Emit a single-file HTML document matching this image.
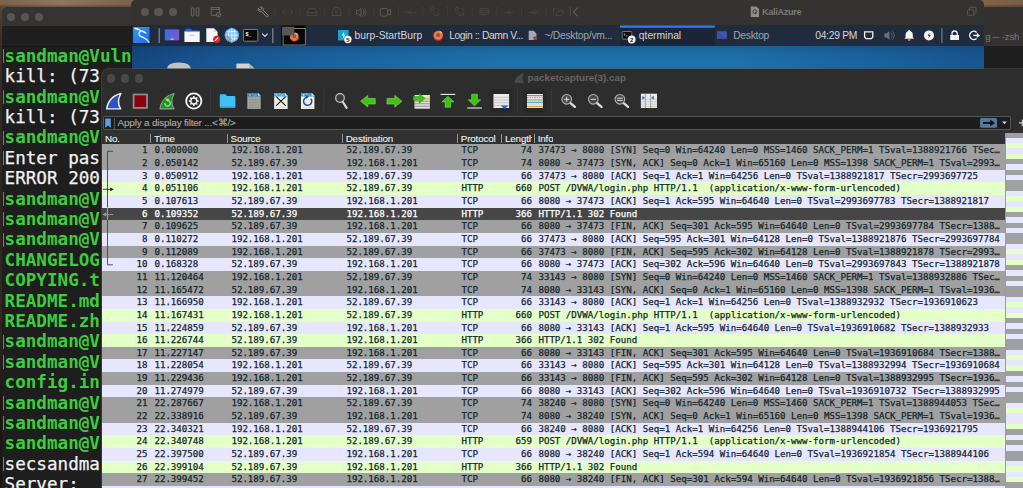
<!DOCTYPE html>
<html lang="en">
<head>
<meta charset="utf-8">
<title>packetcapture(3).cap</title>
<style>
html,body{margin:0;padding:0;}
body{opacity:0.999;width:1023px;height:488px;overflow:hidden;position:relative;background:#6b5240;font-family:"Liberation Sans",sans-serif;}
.abs{position:absolute;}
#wood{position:absolute;left:0;top:0;width:1023px;height:488px;background:linear-gradient(180deg,rgba(0,0,0,0) 0,rgba(0,0,0,0) 4px,rgba(30,20,10,0.35) 7px,rgba(30,20,10,0.45) 100%),linear-gradient(90deg,#7a614c,#8f765e 6%,#7c634d 12%,#94795f 20%,#80674f 30%,#6f5845 45%,#7b6049 80%,#80654b 96%,#775d45);}
/* left terminal */
#term{position:absolute;left:1.5px;top:7px;width:140.5px;height:490px;background:#1e1e1e;border-radius:6px 0 0 0;overflow:hidden;}
#term .tb{position:absolute;left:0;top:0;width:100%;height:19px;background:#353433;}
#term .tab{position:absolute;left:0;top:19px;width:100%;height:20px;background:#1f1f1f;border-bottom:1px dotted #111;}
.dot{position:absolute;width:8.6px;height:8.6px;border-radius:50%;background:#575655;}
.tl{position:absolute;left:3.1px;white-space:pre;font-family:"DejaVu Sans Mono","Liberation Mono",monospace;font-size:17.6px;line-height:20.4px;height:20.4px;}
.tl.p{color:#3ccc3c;font-weight:bold;}
.tl.w{color:#f2f2f2;-webkit-text-stroke:0.25px;}
.tl .mk{position:absolute;left:-1.4px;top:3.5px;width:1px;height:14px;background:#7c7c7c;}
/* right terminal */
#rterm{position:absolute;left:980px;top:7px;width:60px;height:70px;background:#1e1e1e;}
#rterm .tb{position:absolute;left:0;top:0;width:100%;height:39px;background:#333231;}
#rterm .tt{position:absolute;left:5.2px;top:23.8px;letter-spacing:-0.2px;font-size:9.5px;color:#7a7a7a;white-space:pre;}
/* VM window */
#vm{position:absolute;left:131px;top:0;width:853px;height:80px;background:#1a6aa3;border-radius:5px 5px 0 0;overflow:hidden;}
#vm .tb{position:absolute;left:0;top:0;width:100%;height:25px;background:#343331;}
#vm .panel{position:absolute;left:0;top:25px;width:100%;height:20.5px;background:#202b3d;}
#vm .desk{position:absolute;left:0;top:45.5px;width:100%;height:30px;background:linear-gradient(180deg,rgba(10,30,70,0.2) 0%,rgba(10,30,70,0.05) 25%,rgba(0,0,0,0) 50%),linear-gradient(90deg,#15477e 0%,#185590 10%,#1b639f 24%,#1e72ac 45%,#1e72ac 70%,#1a619c 88%,#17558f 100%);}
.pt{position:absolute;top:30.2px;font-size:10.3px;line-height:12px;color:#d3d7dd;white-space:pre;}
/* wireshark */
#ws{position:absolute;left:101.5px;top:69px;width:940px;height:430px;background:#2d2d2d;border-radius:6px 0 0 0;overflow:hidden;box-shadow:0 0 0 0.5px #555;}
#ws .title{position:absolute;left:426px;top:3.4px;font-size:9.85px;font-weight:bold;color:#656565;line-height:12px;white-space:pre;}
#filter{position:absolute;left:1.5px;top:47.1px;width:906px;height:12px;background:#1d1d1d;border:1px solid #565656;border-radius:2px;}
#filter .ft{position:absolute;left:13.6px;top:0.2px;font-size:9.9px;letter-spacing:-0.17px;-webkit-text-stroke:0.15px;line-height:12px;color:#a8a8a8;white-space:pre;}
#hdr{position:absolute;left:0;top:61.2px;width:921.5px;height:14.2px;background:#313131;}
#hdr span{position:absolute;top:2.8px;font-size:9.8px;letter-spacing:-0.15px;-webkit-text-stroke:0.1px #f2f2f2;line-height:12px;color:#f2f2f2;white-space:pre;overflow:hidden;}
#hdr i{position:absolute;top:3.6px;width:1px;height:9.4px;background:#949494;}
#list{position:absolute;left:101.5px;top:0;width:904.5px;height:488px;overflow:hidden;}
.r{-webkit-text-stroke:0.25px;position:absolute;left:0.4px;width:904.5px;height:12.75px;font-family:"DejaVu Sans Mono","Liberation Mono",monospace;font-size:9.13px;line-height:12.65px;color:#12272e;white-space:pre;}
.r span{position:absolute;top:0;}
.r.g{background:#a0a0a0;}
.r.t{background:#e7e6ff;}
.r.h{background:#e4ffc7;}
.r.s{background:#464646;color:#fff;}
.no{left:0;width:45.5px;text-align:right;}
.tm{left:52.5px;}
.sr{left:129.5px;}
.ds{left:244.5px;}
.pr{left:359.5px;}
.ln{left:400px;width:30px;text-align:right;}
.in{left:436.5px;}
#mm{position:absolute;left:1005.3px;top:130px;width:18px;height:358px;overflow:hidden;}
#mm:after{content:"";position:absolute;left:0;top:3.3px;width:1px;height:360px;background:#9a9a9a;}
#mm div{position:absolute;left:0;width:18px;}
</style>
</head>
<body>
<div id="wood"></div>
<div style="position:absolute;left:0;top:4px;width:2px;height:484px;background:linear-gradient(180deg,rgba(20,16,14,0) 0,rgba(20,16,14,0.45) 40px,rgba(20,16,14,0.6) 200px,rgba(20,16,14,0.5) 300px,rgba(20,16,14,0.85) 400px,rgba(20,16,14,0.9) 100%)"></div>

<!-- left terminal -->
<div id="term">
  <div class="tb"></div>
  <div class="tab"></div>
  <div class="dot" style="left:5px;top:5.5px"></div>
  <div class="dot" style="left:19px;top:5.5px"></div>
  <div class="dot" style="left:33px;top:5.5px"></div>
<div class="tl p" style="top:38.70px"><i class="mk"></i>sandman@VulnServer</div>
<div class="tl w" style="top:59.10px">kill: (73</div>
<div class="tl p" style="top:79.50px"><i class="mk"></i>sandman@V</div>
<div class="tl w" style="top:99.90px">kill: (73</div>
<div class="tl p" style="top:120.30px"><i class="mk"></i>sandman@V</div>
<div class="tl w" style="top:140.70px"><i class="mk"></i>Enter pas</div>
<div class="tl w" style="top:161.10px">ERROR 200</div>
<div class="tl p" style="top:181.50px"><i class="mk"></i>sandman@V</div>
<div class="tl p" style="top:201.90px"><i class="mk"></i>sandman@V</div>
<div class="tl p" style="top:222.30px"><i class="mk"></i>sandman@V</div>
<div class="tl p" style="top:242.70px">CHANGELOG</div>
<div class="tl p" style="top:263.10px">COPYING.t</div>
<div class="tl p" style="top:283.50px">README.md</div>
<div class="tl p" style="top:303.90px">README.zh</div>
<div class="tl p" style="top:324.30px"><i class="mk"></i>sandman@V</div>
<div class="tl p" style="top:344.70px"><i class="mk"></i>sandman@V</div>
<div class="tl p" style="top:365.10px">config.in</div>
<div class="tl p" style="top:385.50px"><i class="mk"></i>sandman@V</div>
<div class="tl p" style="top:405.90px"><i class="mk"></i>sandman@V</div>
<div class="tl p" style="top:426.30px">sandman@V</div>
<div class="tl w" style="top:446.70px"><i class="mk"></i>secsandma</div>
<div class="tl w" style="top:467.10px">Server:</div>
</div>

<!-- right terminal -->
<div id="rterm">
  <div class="tb"></div>
  <div class="tt">g <span style="display:inline-block;transform:scaleX(0.74);transform-origin:50% 50%;margin:0 -1.3px">—</span> -zsh</div>
</div>

<!-- VM window -->
<div id="vm">
  <div class="tb"></div>
  <div class="panel"></div>
  <div class="desk"></div>
  <div style="position:absolute;left:0;top:25px;width:1.2px;height:60px;background:#14181f"></div>
  <div class="dot" style="left:9.5px;top:7.6px"></div>
  <div class="dot" style="left:23.3px;top:7.6px"></div>
  <div class="dot" style="left:37.6px;top:7.6px"></div>
</div>

<svg class="abs" style="left:0;top:0" width="1023" height="70" viewBox="0 0 1023 70">
<defs>
<linearGradient id="kg" x1="0" y1="0" x2="1" y2="1"><stop offset="0" stop-color="#2f9cf4"/><stop offset="1" stop-color="#2366e2"/></linearGradient>
<linearGradient id="pg" x1="0" y1="0" x2="1" y2="0"><stop offset="0" stop-color="#3a6cea"/><stop offset="1" stop-color="#7d58c6"/></linearGradient>
<radialGradient id="ff" cx="0.5" cy="0.45" r="0.6"><stop offset="0" stop-color="#4a5be0"/><stop offset="0.28" stop-color="#6a4fd0"/><stop offset="0.42" stop-color="#ff8a1a"/><stop offset="1" stop-color="#ee3a1e"/></radialGradient>
</defs>
<!-- title bar icons -->
<g fill="none" stroke="#6f6e6b" stroke-width="0.9">
<rect x="191.3" y="7.8" width="2.6" height="8.2" rx="0.6"/><rect x="196.3" y="7.8" width="2.6" height="8.2" rx="0.6"/>
<path d="M211.2,15.4 V7.6 H219.6 V12.2 M211.2,9.4 H219.6 M211.2,15.4 H216"/><circle cx="218.6" cy="14.8" r="2.3"/><path d="M217.6,14.9 l0.8,0.8 l1.3,-1.6"/>
</g>
<path d="M258.3,8.4 a2.6,2.6 0 0 0 3.4,3.2 l4.6,5 a1,1 0 0 0 1.7,-1.5 l-4.8,-4.8 a2.6,2.6 0 0 0 -2.9,-3.4 l1.5,1.7 l-1.6,1.6 Z" fill="none" stroke="#8b8a87" stroke-width="0.9"/>
<g stroke="#474644" stroke-width="0.8" stroke-dasharray="1.4,1">
<path d="M275.3,7 v9.5 M300,7 v9.5 M324.6,7 v9.5 M349.3,7 v9.5 M374,7 v9.5 M398.5,7 v9.5 M423,7 v9.5 M447.5,7 v9.5 M472.2,7 v9.5 M496.7,7 v9.5 M521.6,7 v9.5 M546.2,7 v9.5"/>
</g>
<path d="M570.3,7 v9.5" stroke="#555452" stroke-width="0.8"/>
<g fill="none" stroke="#4a4947" stroke-width="0.9">
<path d="M285.6,9.8 L282.6,12.3 L285.6,14.8 M290,9.8 L293,12.3 L290,14.8" /><path d="M286.4,12.3 h3" stroke-dasharray="0.8,0.8"/>
<path d="M308.8,8.4 h6.4 l1.8,4.2 v2.8 h-10 v-2.8 Z M307,12.6 h10"/>
<path d="M332.2,15.4 v-3.6 a4.3,4.3 0 0 1 8.6,0 v3.6 Z M331,15.6 h11"/><circle cx="336.5" cy="11.6" r="1.3"/>
</g>
<g fill="none" stroke="#62615e" stroke-width="0.9">
<path d="M356.4,10.6 h2 l2.6,-2.3 v8 l-2.6,-2.3 h-2 Z"/><path d="M362.6,9.4 a3.6,3.6 0 0 1 0,5.8"/><path d="M364,8 a5.4,5.4 0 0 1 0,8.6" stroke-width="0.7"/>
<rect x="380.2" y="8.4" width="7.4" height="7.6" rx="1.4"/><path d="M387.6,11.2 l3,-1.8 v5.8 l-3,-1.8"/>
</g>
<g fill="none" stroke="#454442" stroke-width="0.9">
<path d="M405,12.3 h10.5 M408,12.3 l3.6,-3 M408,12.3 l3.6,3"/>
<path d="M430.6,8 q0,7.6 7.6,8 l1,-2.2 l-2.4,-1.2 l-1,1 q-2.2,-1 -3,-3.2 l1,-1 l-1.2,-2.4 Z M436.4,8.2 a4,4 0 0 1 3,3"/>
<path d="M455.2,8 q0,7.6 7.6,8 l1,-2.2 l-2.4,-1.2 l-1,1 q-2.2,-1 -3,-3.2 l1,-1 l-1.2,-2.4 Z M461,8.2 a4,4 0 0 1 3,3"/>
<path d="M480,8.6 h8.4 v5.6 h-8.4 Z M480,10.4 h8.4 M480,12.2 h8.4 M483,14.2 v2 M485.4,14.2 v2"/>
<path d="M504,12.3 h10.5 M507,12.3 l3.6,-3 M507,12.3 l3.6,3"/>
<path d="M528.6,12.3 h10.5 M531.6,12.3 l3.6,-3 M531.6,12.3 l3.6,3 M536,10 v4.6"/>
<path d="M553.4,15.6 v-7 h3.4 l1,1.2 h4.4 v2 M555.4,15.6 l2,-4 h6.6 l-2,4 Z"/>
</g>
<path d="M577.8,7.6 L573.4,11.9 L577.8,16.2" fill="none" stroke="#73726f" stroke-width="1"/>
<!-- title -->
<path d="M750.8,6.5 h5.6 l2.6,2.6 v8 h-8.2 Z" fill="#8f8e8b"/>
<circle cx="754.8" cy="11.6" r="1.9" fill="none" stroke="#3a3937" stroke-width="0.9"/><path d="M754.8,11.6 l1.6,1.8" stroke="#3a3937" stroke-width="0.9"/>
<g fill="none" stroke="#5b5a57" stroke-width="0.9"><rect x="967.6" y="9.7" width="6.2" height="5.6" rx="0.8"/><path d="M969.4,9.7 v-1.6 q0,-0.8 0.8,-0.8 h5 q0.8,0 0.8,0.8 v4.4 q0,0.8 -0.8,0.8 h-1.4"/></g>
<!-- panel: kali menu -->
<rect x="133.2" y="27" width="16.3" height="16" fill="url(#kg)"/>
<path d="M133.8,27.8 q3.4,-0.4 5.8,1.4 q1.4,1 1.8,2.2 q-2,-1.3 -4,-1.5 q-2.4,-0.4 -3.6,-2.1 Z" fill="#f4f7ff"/>
<path d="M141.2,30.8 C138.4,32 138.2,35.2 140.8,36.4 C143.8,37.6 146.8,38.8 148.8,42.2" fill="none" stroke="#eaf2ff" stroke-width="1.3" stroke-linecap="round"/>
<path d="M140.6,30.6 q3.2,-0.8 5,1.5 q0.9,1.1 1.3,2.3 q-1.5,-1.3 -3.1,-1.7 q-1.8,-0.6 -3.2,-2.1 Z" fill="#eef4ff"/>
<path d="M147.6,40.2 l1.6,2.6" stroke="#c9c9c9" stroke-width="1"/>
<path d="M159.2,28.2 v14.8 M272.8,28.2 v14.8" stroke="#7c8788" stroke-width="1.3"/>
<!-- show desktop -->
<rect x="164.8" y="29.4" width="14.4" height="11" fill="url(#pg)"/><rect x="170.4" y="38.6" width="3.4" height="1" fill="#dfe3f6"/>
<!-- file manager -->
<path d="M185.6,28.8 h5.4 l1.2,1.6 h-6.6 Z" fill="#2b69e2"/><rect x="185.6" y="30" width="3" height="1.2" fill="#2b69e2"/>
<rect x="184.4" y="31" width="15.3" height="11" rx="0.6" fill="#f4f5f7"/><rect x="184.4" y="30.4" width="15.3" height="1.3" fill="#2b69e2" opacity="0.85"/>
<path d="M189.6,35.4 h5" stroke="#c8cad0" stroke-width="1"/>
<!-- text editor -->
<path d="M206.3,28.2 h7.6 l3.7,3.7 v10.1 h-11.3 Z" fill="#f6f6f6"/><path d="M213.9,28.2 l3.7,3.7 h-3.7 Z" fill="#d8d8d8"/>
<circle cx="216.7" cy="39.3" r="3.6" fill="#dc2a2a"/><path d="M215,40.8 l3.2,-3.2" stroke="#fff" stroke-width="1.1"/>
<!-- browser globe -->
<circle cx="231.8" cy="35.2" r="7" fill="#7ec4f6"/>
<g fill="none" stroke="#e8f5ff" stroke-width="0.8"><ellipse cx="231.8" cy="35.2" rx="3.2" ry="7"/><path d="M224.8,35.2 h14 M231.8,28.2 v14 M225.8,31.6 h12 M225.8,38.8 h12"/><circle cx="231.8" cy="35.2" r="6.6" stroke="#4a9de6"/></g>
<path d="M227.2,35 l0,6.4 l1.5,-1.4 l1.2,2.4 l1,-0.5 l-1.1,-2.3 l2,-0.1 Z" fill="#a6a6a6" stroke="#666" stroke-width="0.3"/>
<!-- terminal -->
<rect x="243.4" y="29.4" width="14.4" height="11.8" rx="1" fill="#0c0c0c" stroke="#8a8a8a" stroke-width="0.9"/>
<text x="245.4" y="35.6" font-family="Liberation Mono, monospace" font-size="5.2" font-weight="bold" fill="#fff">$_</text>
<path d="M262.2,33.6 l2.7,2.7 l2.7,-2.7" fill="none" stroke="#d9dde3" stroke-width="1.2"/>
<!-- workspace switcher -->
<rect x="281" y="25.6" width="24.6" height="19.9" fill="#060606"/>
<circle cx="294.3" cy="36.9" r="4.5" fill="url(#ff)"/><path d="M290.3,38.4 a4.5,4.5 0 0 0 8.2,0.4 a4.4,4.4 0 0 1 -8.2,-0.4" fill="#e62a1c"/><path d="M295.4,32.4 q2.6,0.8 3,3.6 q-1,-1.6 -2.4,-1.8 Z" fill="#ffd23a"/>
<rect x="283.1" y="28.4" width="22.2" height="16.6" fill="none" stroke="#9a9a9a" stroke-width="0.8"/>
<rect x="282" y="26.7" width="12.3" height="8.7" fill="#585858"/>
<!-- burp -->
<rect x="338" y="30" width="10.6" height="10.4" fill="#18a4c6"/><path d="M344.4,31.2 l-2.6,4.2 h1.8 l-1,3.6 l3,-4.6 h-1.9 Z" fill="#e9f8ff"/>
<circle cx="347.9" cy="39.5" r="3.7" fill="#f4f4f4"/><text x="346.3" y="41.6" font-size="5.8" font-weight="bold" fill="#222" font-family="Liberation Sans, sans-serif">5</text>
<!-- firefox task -->
<circle cx="438.2" cy="35.6" r="4.9" fill="url(#ff)"/><path d="M433.6,37 a4.9,4.9 0 0 0 9.2,0.6 a4.7,4.7 0 0 1 -9.2,-0.6" fill="#e62a1c"/><path d="M439.4,30.4 q2.8,1 3.4,4 q-1.2,-1.8 -2.8,-2 Z" fill="#ffd23a"/>
<!-- doc task -->
<g opacity="0.75"><path d="M528.7,30.8 h5 l2.7,2.7 v6.5 h-7.7 Z" fill="#ccd3de"/><rect x="533.4" y="36.4" width="3.6" height="3.6" rx="0.8" fill="#d63a3a"/></g>
<!-- active task -->
<rect x="620" y="25.4" width="94.8" height="20" fill="#1a2535"/><rect x="620" y="25.4" width="94.8" height="2.4" fill="#2b7af2"/>
<rect x="622.2" y="31.5" width="9.6" height="7.6" rx="0.8" fill="#0c0c0c" stroke="#8a8a8a" stroke-width="0.8"/><path d="M623.8,33.4 l1.4,1.1 l-1.4,1.1 M626,36 h1.6" stroke="#fff" stroke-width="0.6" fill="none"/>
<circle cx="631.7" cy="39.5" r="3.9" fill="#f4f4f4"/><text x="629.9" y="41.7" font-size="6" font-weight="bold" fill="#222" font-family="Liberation Sans, sans-serif">2</text>
<!-- desktop task -->
<rect x="716.9" y="31.3" width="9.9" height="7.7" fill="#3b4fa6"/><path d="M718,31.3 l8.8,6 M721,31.3 l5.8,4 M724,31.3 l2.8,2" stroke="#5568b8" stroke-width="0.7"/>
<!-- tray -->
<path d="M864.6,31.9 h8.2 v5 l-1.4,1.7 h-5.4 l-1.4,-1.7 Z" fill="none" stroke="#f2f2f2" stroke-width="1.3"/>
<g fill="#66717f"><path d="M884.4,33.6 h2 l3,-2.6 v9 l-3,-2.6 h-2 Z"/></g><path d="M890.8,32.8 a3.4,3.4 0 0 1 0,5.4 M892,31 a5.6,5.6 0 0 1 0,9" fill="none" stroke="#56616f" stroke-width="0.9"/>
<path d="M909.2,30 a1,1 0 0 1 1,1 a3.4,3.4 0 0 1 2.6,3.3 v3 l1.2,1.5 h-9.6 l1.2,-1.5 v-3 a3.4,3.4 0 0 1 2.6,-3.3 a1,1 0 0 1 1,-1 Z M908,39.4 h2.4 a1.2,1.2 0 0 1 -2.4,0 Z" fill="#f4f4f4"/>
<circle cx="929" cy="35.4" r="5" fill="#f4f4f4"/><path d="M929.8,32.4 l-2.2,3.4 h1.6 l-0.8,2.8 l2.4,-3.6 h-1.6 Z" fill="#1d2a3f"/>
<path d="M941.9,28.2 v14.8" stroke="#7b877f" stroke-width="1.1"/>
<path d="M950.2,35 h8.8 v5 h-8.8 Z" fill="#f4f4f4"/><path d="M952,35 v-1.4 a2.6,2.6 0 0 1 5.2,0 v1.4" fill="none" stroke="#f4f4f4" stroke-width="1.3"/>
<path d="M976.6,32.4 a4.1,4.1 0 1 0 0,6" fill="none" stroke="#f4f4f4" stroke-width="1.4"/><path d="M973.4,35.4 h4" stroke="#f4f4f4" stroke-width="1.4"/><path d="M976.8,32.8 l3.2,2.6 l-3.2,2.6 Z" fill="#f4f4f4"/>
<!-- desktop icons peeking -->
<path d="M166.9,68.8 q0.6,-6.2 12,-6.3 q11.4,0.1 12,6.3 Z" fill="#c2c2c2"/>
<path d="M236.4,68.8 v-4.3 q0,-1 1,-1 h11.6 l5.8,5.3 Z" fill="#d4d4d4"/><path d="M249,63.5 l5.8,5.3 h-5.8 Z" fill="#b4b4b4"/>
</svg>

<div class="pt" style="left:354.6px">burp-StartBurp</div>
<div class="pt" style="left:449.2px;letter-spacing:-0.43px">Login :: Damn V...</div>
<div class="pt" style="left:544.4px;color:#9ca5b2;letter-spacing:-0.25px">~/Desktop/vm...</div>
<div class="pt" style="left:638.8px">qterminal</div>
<div class="pt" style="left:733.2px;color:#9ca5b2;letter-spacing:-0.27px">Desktop</div>
<div class="pt" style="left:815.2px;letter-spacing:-0.26px">04:29 PM</div>
<div class="pt" style="left:762px;top:6.3px;color:#7b7a77;font-size:9.2px;font-weight:bold;letter-spacing:-0.35px">KaliAzure</div>
<!-- wireshark -->
<div id="ws">
  <div class="dot" style="left:5px;top:5.4px;background:#4a4a4a"></div>
  <div class="dot" style="left:19px;top:5.4px;background:#4a4a4a"></div>
  <div class="dot" style="left:33px;top:5.4px;background:#4a4a4a"></div>
  <div class="title">packetcapture(3).cap</div>
  <div id="filter"><div class="ft">Apply a display filter ...&lt;⌘/&gt;</div></div>
  <div id="hdr">
    <span style="left:3.5px">No.</span>
    <i style="left:48.4px"></i><span style="left:52.5px">Time</span>
    <i style="left:125px"></i><span style="left:129px">Source</span>
    <i style="left:240.3px"></i><span style="left:244.2px">Destination</span>
    <i style="left:355.4px"></i><span style="left:359.3px">Protocol</span>
    <i style="left:399.3px"></i><span style="left:403.5px;width:27px">Length</span>
    <i style="left:432.3px"></i><span style="left:436.2px">Info</span>
  </div>
</div>
<div id="list">
<div class="r g" style="top:144.40px"><span class="no">1</span><span class="tm">0.000000</span><span class="sr">192.168.1.201</span><span class="ds">52.189.67.39</span><span class="pr">TCP</span><span class="ln">74</span><span class="in">37473 → 8080 [SYN] Seq=0 Win=64240 Len=0 MSS=1460 SACK_PERM=1 TSval=1388921766 TSec…</span></div>
<div class="r g" style="top:157.05px"><span class="no">2</span><span class="tm">0.050142</span><span class="sr">52.189.67.39</span><span class="ds">192.168.1.201</span><span class="pr">TCP</span><span class="ln">74</span><span class="in">8080 → 37473 [SYN, ACK] Seq=0 Ack=1 Win=65160 Len=0 MSS=1398 SACK_PERM=1 TSval=2993…</span></div>
<div class="r t" style="top:169.70px"><span class="no">3</span><span class="tm">0.050912</span><span class="sr">192.168.1.201</span><span class="ds">52.189.67.39</span><span class="pr">TCP</span><span class="ln">66</span><span class="in">37473 → 8080 [ACK] Seq=1 Ack=1 Win=64256 Len=0 TSval=1388921817 TSecr=2993697725</span></div>
<div class="r h" style="top:182.35px"><span class="no">4</span><span class="tm">0.051106</span><span class="sr">192.168.1.201</span><span class="ds">52.189.67.39</span><span class="pr">HTTP</span><span class="ln">660</span><span class="in">POST /DVWA/login.php HTTP/1.1  (application/x-www-form-urlencoded)</span></div>
<div class="r t" style="top:195.00px"><span class="no">5</span><span class="tm">0.107613</span><span class="sr">52.189.67.39</span><span class="ds">192.168.1.201</span><span class="pr">TCP</span><span class="ln">66</span><span class="in">8080 → 37473 [ACK] Seq=1 Ack=595 Win=64640 Len=0 TSval=2993697783 TSecr=1388921817</span></div>
<div class="r s" style="top:207.65px"><span class="no">6</span><span class="tm">0.109352</span><span class="sr">52.189.67.39</span><span class="ds">192.168.1.201</span><span class="pr">HTTP</span><span class="ln">366</span><span class="in">HTTP/1.1 302 Found</span></div>
<div class="r g" style="top:220.30px"><span class="no">7</span><span class="tm">0.109625</span><span class="sr">52.189.67.39</span><span class="ds">192.168.1.201</span><span class="pr">TCP</span><span class="ln">66</span><span class="in">8080 → 37473 [FIN, ACK] Seq=301 Ack=595 Win=64640 Len=0 TSval=2993697784 TSecr=1388…</span></div>
<div class="r t" style="top:232.95px"><span class="no">8</span><span class="tm">0.110272</span><span class="sr">192.168.1.201</span><span class="ds">52.189.67.39</span><span class="pr">TCP</span><span class="ln">66</span><span class="in">37473 → 8080 [ACK] Seq=595 Ack=301 Win=64128 Len=0 TSval=1388921876 TSecr=2993697784</span></div>
<div class="r g" style="top:245.60px"><span class="no">9</span><span class="tm">0.112089</span><span class="sr">192.168.1.201</span><span class="ds">52.189.67.39</span><span class="pr">TCP</span><span class="ln">66</span><span class="in">37473 → 8080 [FIN, ACK] Seq=595 Ack=302 Win=64128 Len=0 TSval=1388921878 TSecr=2993…</span></div>
<div class="r t" style="top:258.25px"><span class="no">10</span><span class="tm">0.168328</span><span class="sr">52.189.67.39</span><span class="ds">192.168.1.201</span><span class="pr">TCP</span><span class="ln">66</span><span class="in">8080 → 37473 [ACK] Seq=302 Ack=596 Win=64640 Len=0 TSval=2993697843 TSecr=1388921878</span></div>
<div class="r g" style="top:270.90px"><span class="no">11</span><span class="tm">11.120464</span><span class="sr">192.168.1.201</span><span class="ds">52.189.67.39</span><span class="pr">TCP</span><span class="ln">74</span><span class="in">33143 → 8080 [SYN] Seq=0 Win=64240 Len=0 MSS=1460 SACK_PERM=1 TSval=1388932886 TSec…</span></div>
<div class="r g" style="top:283.55px"><span class="no">12</span><span class="tm">11.165472</span><span class="sr">52.189.67.39</span><span class="ds">192.168.1.201</span><span class="pr">TCP</span><span class="ln">74</span><span class="in">8080 → 33143 [SYN, ACK] Seq=0 Ack=1 Win=65160 Len=0 MSS=1398 SACK_PERM=1 TSval=1936…</span></div>
<div class="r t" style="top:296.20px"><span class="no">13</span><span class="tm">11.166950</span><span class="sr">192.168.1.201</span><span class="ds">52.189.67.39</span><span class="pr">TCP</span><span class="ln">66</span><span class="in">33143 → 8080 [ACK] Seq=1 Ack=1 Win=64256 Len=0 TSval=1388932932 TSecr=1936910623</span></div>
<div class="r h" style="top:308.85px"><span class="no">14</span><span class="tm">11.167431</span><span class="sr">192.168.1.201</span><span class="ds">52.189.67.39</span><span class="pr">HTTP</span><span class="ln">660</span><span class="in">POST /DVWA/login.php HTTP/1.1  (application/x-www-form-urlencoded)</span></div>
<div class="r t" style="top:321.50px"><span class="no">15</span><span class="tm">11.224859</span><span class="sr">52.189.67.39</span><span class="ds">192.168.1.201</span><span class="pr">TCP</span><span class="ln">66</span><span class="in">8080 → 33143 [ACK] Seq=1 Ack=595 Win=64640 Len=0 TSval=1936910682 TSecr=1388932933</span></div>
<div class="r h" style="top:334.15px"><span class="no">16</span><span class="tm">11.226744</span><span class="sr">52.189.67.39</span><span class="ds">192.168.1.201</span><span class="pr">HTTP</span><span class="ln">366</span><span class="in">HTTP/1.1 302 Found</span></div>
<div class="r g" style="top:346.80px"><span class="no">17</span><span class="tm">11.227147</span><span class="sr">52.189.67.39</span><span class="ds">192.168.1.201</span><span class="pr">TCP</span><span class="ln">66</span><span class="in">8080 → 33143 [FIN, ACK] Seq=301 Ack=595 Win=64640 Len=0 TSval=1936910684 TSecr=1388…</span></div>
<div class="r t" style="top:359.45px"><span class="no">18</span><span class="tm">11.228054</span><span class="sr">192.168.1.201</span><span class="ds">52.189.67.39</span><span class="pr">TCP</span><span class="ln">66</span><span class="in">33143 → 8080 [ACK] Seq=595 Ack=301 Win=64128 Len=0 TSval=1388932994 TSecr=1936910684</span></div>
<div class="r g" style="top:372.10px"><span class="no">19</span><span class="tm">11.229436</span><span class="sr">192.168.1.201</span><span class="ds">52.189.67.39</span><span class="pr">TCP</span><span class="ln">66</span><span class="in">33143 → 8080 [FIN, ACK] Seq=595 Ack=302 Win=64128 Len=0 TSval=1388932995 TSecr=1936…</span></div>
<div class="r t" style="top:384.75px"><span class="no">20</span><span class="tm">11.274979</span><span class="sr">52.189.67.39</span><span class="ds">192.168.1.201</span><span class="pr">TCP</span><span class="ln">66</span><span class="in">8080 → 33143 [ACK] Seq=302 Ack=596 Win=64640 Len=0 TSval=1936910732 TSecr=1388932995</span></div>
<div class="r g" style="top:397.40px"><span class="no">21</span><span class="tm">22.287667</span><span class="sr">192.168.1.201</span><span class="ds">52.189.67.39</span><span class="pr">TCP</span><span class="ln">74</span><span class="in">38240 → 8080 [SYN] Seq=0 Win=64240 Len=0 MSS=1460 SACK_PERM=1 TSval=1388944053 TSec…</span></div>
<div class="r g" style="top:410.05px"><span class="no">22</span><span class="tm">22.338916</span><span class="sr">52.189.67.39</span><span class="ds">192.168.1.201</span><span class="pr">TCP</span><span class="ln">74</span><span class="in">8080 → 38240 [SYN, ACK] Seq=0 Ack=1 Win=65160 Len=0 MSS=1398 SACK_PERM=1 TSval=1936…</span></div>
<div class="r t" style="top:422.70px"><span class="no">23</span><span class="tm">22.340321</span><span class="sr">192.168.1.201</span><span class="ds">52.189.67.39</span><span class="pr">TCP</span><span class="ln">66</span><span class="in">38240 → 8080 [ACK] Seq=1 Ack=1 Win=64256 Len=0 TSval=1388944106 TSecr=1936921795</span></div>
<div class="r h" style="top:435.35px"><span class="no">24</span><span class="tm">22.340748</span><span class="sr">192.168.1.201</span><span class="ds">52.189.67.39</span><span class="pr">HTTP</span><span class="ln">659</span><span class="in">POST /DVWA/login.php HTTP/1.1  (application/x-www-form-urlencoded)</span></div>
<div class="r t" style="top:448.00px"><span class="no">25</span><span class="tm">22.397500</span><span class="sr">52.189.67.39</span><span class="ds">192.168.1.201</span><span class="pr">TCP</span><span class="ln">66</span><span class="in">8080 → 38240 [ACK] Seq=1 Ack=594 Win=64640 Len=0 TSval=1936921854 TSecr=1388944106</span></div>
<div class="r h" style="top:460.65px"><span class="no">26</span><span class="tm">22.399104</span><span class="sr">52.189.67.39</span><span class="ds">192.168.1.201</span><span class="pr">HTTP</span><span class="ln">366</span><span class="in">HTTP/1.1 302 Found</span></div>
<div class="r g" style="top:473.30px"><span class="no">27</span><span class="tm">22.399452</span><span class="sr">52.189.67.39</span><span class="ds">192.168.1.201</span><span class="pr">TCP</span><span class="ln">66</span><span class="in">8080 → 38240 [FIN, ACK] Seq=301 Ack=594 Win=64640 Len=0 TSval=1936921856 TSecr=1388…</span></div>
<div class="r t" style="top:485.95px"><span class="no">28</span><span class="tm">22.399990</span><span class="sr">192.168.1.201</span><span class="ds">52.189.67.39</span><span class="pr">TCP</span><span class="ln">66</span><span class="in">38240 → 8080 [ACK] Seq=594 Ack=301 Win=64128 Len=0 TSval=1388944165 TSecr=1936921856</span></div>
</div>
<svg class="abs" style="left:0;top:0" width="1023" height="488" viewBox="0 0 1023 488">
<!-- title icon -->
<path d="M0.6,16 C1.2,9 6.5,2.4 14.8,0.6 C12.4,4.8 11.4,11 14.6,16 Z" transform="translate(514,73) scale(0.68,0.62)" fill="#494949"/>
<!-- start capture (blue fin) -->
<path d="M0.6,16 C1.2,9 6.5,2.4 14.8,0.6 C12.4,4.8 11.4,11 14.6,16 Z" transform="translate(106.1,92.9)" fill="#3050c8" stroke="#f0f0f0" stroke-width="1.4" stroke-linejoin="round"/>
<!-- stop (red square) -->
<rect x="133.6" y="94.5" width="13.4" height="13.4" fill="#8e000e" stroke="#8c8c8a" stroke-width="1.8"/>
<!-- restart (green fin) -->
<path d="M0.6,16 C1.2,9 6.5,2.4 14.8,0.6 C12.4,4.8 11.4,11 14.6,16 Z" transform="translate(159.4,92.9)" fill="#0f9a12" stroke="#9a9a9a" stroke-width="1.1" stroke-linejoin="round"/>
<path d="M164.9,103 a2.7,2.7 0 1 0 2.9,-2.3" fill="none" stroke="#b9cdb9" stroke-width="1.3"/>
<path d="M165.2,98.4 L169.4,98.8 L167.2,102 Z" fill="#b9cdb9"/>
<!-- options gear -->
<circle cx="193.8" cy="101" r="7.6" fill="none" stroke="#f6f6f6" stroke-width="1.8"/>
<circle cx="193.8" cy="101" r="3.7" fill="#f6f6f6"/>
<g stroke="#f6f6f6" stroke-width="1.6">
<line x1="193.8" y1="96.1" x2="193.8" y2="105.9"/><line x1="188.9" y1="101" x2="198.7" y2="101"/>
<line x1="190.35" y1="97.55" x2="197.25" y2="104.45"/><line x1="190.35" y1="104.45" x2="197.25" y2="97.55"/>
</g>
<circle cx="193.8" cy="101" r="2.35" fill="#2d2d2d"/>
<!-- separators -->
<g stroke="#4e4e4e" stroke-width="1" stroke-dasharray="1,1.6">
<line x1="210.5" y1="89" x2="210.5" y2="112.5"/>
<line x1="323.8" y1="89" x2="323.8" y2="112.5"/>
<line x1="517.4" y1="89" x2="517.4" y2="112.5"/>
<line x1="551.4" y1="89" x2="551.4" y2="112.5"/>
</g>
<!-- folder -->
<path d="M219.8,95.3 q0,-1 1,-1 h4.6 l1.6,1.7 h7.4 q1,0 1,1 v9.7 q0,1 -1,1 h-13.6 q-1,0 -1,-1 Z" fill="#3fc0f6"/>
<path d="M219.8,106.2 h15.6 v0.5 q0,1 -1,1 h-13.6 q-1,0 -1,-1 Z" fill="#2fa3dc"/>
<!-- save doc (gray) -->
<g transform="translate(247.3,92.9)">
<path d="M0,0 h10.6 l2.8,2.8 v13.4 h-13.4 Z" fill="#a3a39c"/>
<path d="M0,0 h10.6 l2.8,2.8 v0.9 h-13.4 Z" fill="#2d7dba"/>
<path d="M10.6,0 l2.8,2.8 h-2.8 Z" fill="#cfe0ee"/>
<path d="M1.2,1.6 h2.2 M4.6,1.2 h1.6 M7.2,1.8 h2.2 M2,2.8 h1.4 M6.4,2.9 h1.6" stroke="#9ccbea" stroke-width="0.8"/>
<path d="M2,7 h9.4 M2,9.6 h9.4 M2,12.2 h9.4 M2,14.6 h9.4" stroke="#8b8b84" stroke-width="1" stroke-dasharray="2,0.7"/>
</g>
<!-- close doc (X) -->
<g transform="translate(274.2,92.9)">
<path d="M0,0 h10.6 l2.8,2.8 v13.4 h-13.4 Z" fill="#f1f3ed"/>
<path d="M0,0 h10.6 l2.8,2.8 v0.9 h-13.4 Z" fill="#27a0e4"/>
<path d="M10.6,0 l2.8,2.8 h-2.8 Z" fill="#e4eff7"/>
<path d="M1.2,1.6 h2.2 M4.6,1.2 h1.6 M7.2,1.8 h2.2 M2,2.8 h1.4 M6.4,2.9 h1.6" stroke="#bfe3f7" stroke-width="0.8"/>
<path d="M2,7 h9.4 M2,9.6 h9.4 M2,12.2 h9.4" stroke="#dcdfd6" stroke-width="0.9" stroke-dasharray="2,0.7"/>
<path d="M2,14.6 h9.4" stroke="#c3dcb4" stroke-width="0.9" stroke-dasharray="2,0.7"/>
<path d="M2,3.8 L11.4,12.7 M11.4,3.8 L2,12.7" stroke="#1c1c1c" stroke-width="1.15"/>
</g>
<!-- reload doc -->
<g transform="translate(301,92.9)">
<path d="M0,0 h10.6 l2.8,2.8 v13.4 h-13.4 Z" fill="#f1f3ed"/>
<path d="M0,0 h10.6 l2.8,2.8 v0.9 h-13.4 Z" fill="#27a0e4"/>
<path d="M10.6,0 l2.8,2.8 h-2.8 Z" fill="#e4eff7"/>
<path d="M1.2,1.6 h2.2 M4.6,1.2 h1.6 M2,2.8 h1.4" stroke="#bfe3f7" stroke-width="0.8"/>
<path d="M2,7 h9.4 M2,9.6 h9.4 M2,12.2 h9.4" stroke="#dcdfd6" stroke-width="0.9" stroke-dasharray="2,0.7"/>
<path d="M2,14.6 h9.4" stroke="#c3dcb4" stroke-width="0.9" stroke-dasharray="2,0.7"/>
<path d="M9.9,5.8 A4.1,4.1 0 1 1 5.2,4.5" fill="none" stroke="#20509c" stroke-width="1.5"/>
<path d="M4.4,2.4 L8,3.4 L5.4,6.2 Z" fill="#20509c"/>
</g>
<!-- find (magnifier) -->
<circle cx="340" cy="98" r="4.3" fill="#3c3c3c" stroke="#c8c8c8" stroke-width="1.2"/>
<line x1="342.8" y1="101.8" x2="346.6" y2="107.8" stroke="#d6d6d6" stroke-width="2.2" stroke-linecap="round"/>
<!-- back / forward -->
<path d="M360.6,101.2 L367.8,95.4 V98.4 H375.2 V104 H367.8 V107 Z" fill="#3cc414" stroke="#8fe060" stroke-width="0.6"/>
<path d="M402,101.2 L394.8,95.4 V98.4 H387 V104 H394.8 V107 Z" fill="#3cc414" stroke="#8fe060" stroke-width="0.6"/>
<!-- goto packet -->
<g transform="translate(413.2,93)">
<rect x="1.3" y="2" width="15.4" height="13.7" fill="#e2e2e2"/>
<path d="M1.3,8.2 h15.4 M1.3,10.7 h15.4 M1.3,13.2 h15.4" stroke="#8e8e8e" stroke-width="1.1"/>
<rect x="11.6" y="4.6" width="5.1" height="2.2" fill="#f2c61c"/>
<path d="M0,3.6 H6 V0.6 L12,5.4 L6,10.2 V7.2 H0 Z" fill="#3cc414" stroke="#2a8f0e" stroke-width="0.5"/>
</g>
<!-- first packet -->
<line x1="440.5" y1="94.4" x2="455.3" y2="94.4" stroke="#ececec" stroke-width="1.1"/>
<path d="M447.9,96.2 L454,102 H450.7 V107.3 H445.1 V102 H441.8 Z" fill="#3cc414" stroke="#8fe060" stroke-width="0.5"/>
<!-- last packet -->
<line x1="467.2" y1="108" x2="481.9" y2="108" stroke="#ececec" stroke-width="1.1"/>
<path d="M474.5,106 L480.8,99.8 H477.4 V94.2 H471.6 V99.8 H468.2 Z" fill="#3cc414" stroke="#8fe060" stroke-width="0.5"/>
<!-- autoscroll (pressed) -->
<rect x="490" y="89" width="22.4" height="24" rx="2" fill="#282828"/>
<rect x="493.5" y="94" width="15.6" height="14" fill="#ececec"/>
<path d="M493.5,97.3 h15.6 M493.5,100 h15.6 M493.5,102.7 h15.6 M493.5,105.4 h15.6" stroke="#bdbdbd" stroke-width="0.9"/>
<path d="M500.6,105.6 h8 l-4,3.4 Z" fill="#2868c8"/>
<!-- colorize (pressed) -->
<rect x="523" y="89" width="24" height="24" rx="2" fill="#282828"/>
<rect x="527" y="94" width="16" height="14" fill="#f1f1f1"/>
<path d="M527,95.6 h16" stroke="#e86a6a" stroke-width="1.3"/>
<path d="M527,97.6 h16" stroke="#8a9ee0" stroke-width="1.1" stroke-dasharray="1.6,0.8"/>
<path d="M527,99.9 h16" stroke="#8fd96a" stroke-width="1.8"/>
<path d="M527,102.4 h16" stroke="#6a9fe0" stroke-width="1.5"/>
<path d="M527,104.4 h16" stroke="#d9d9e8" stroke-width="1"/>
<path d="M527,106.5 h16" stroke="#eaa23c" stroke-width="1.4"/>
<!-- zoom in/out/reset -->
<g fill="#484848" stroke="#b6b6b6" stroke-width="1.1">
<circle cx="566.7" cy="99.3" r="4.8"/><circle cx="593.3" cy="99.3" r="4.8"/><circle cx="619.9" cy="99.3" r="4.8"/>
</g>
<g stroke="#dedede" stroke-width="2.3" stroke-linecap="round">
<line x1="570.8" y1="103.4" x2="574.9" y2="106.9"/><line x1="597.4" y1="103.4" x2="601.5" y2="106.9"/><line x1="624" y1="103.4" x2="628.1" y2="106.9"/>
</g>
<g stroke="#e2e2e2" stroke-width="1" fill="none">
<path d="M564.1,99.3 h5.2 M566.7,96.7 v5.2"/>
<path d="M590.7,99.3 h5.2"/>
<path d="M617.2,98.2 h5.4 M617.2,100.4 h5.4"/>
</g>
<!-- resize columns -->
<g transform="translate(640.9,93.7)">
<rect x="0" y="0" width="16.1" height="14.3" fill="#ececec"/>
<path d="M0,5.6 h16.1 M0,8 h16.1 M0,10.4 h16.1 M0,12.8 h16.1" stroke="#c4c4c4" stroke-width="0.8"/>
<path d="M4.5,0 v14.3 M9.8,0 v14.3" stroke="#9a9a9a" stroke-width="0.9"/>
<path d="M1.4,2 l2.6,2 l-2.6,2 Z" fill="#1f6fd0"/>
<path d="M13,2 l-2.6,2 l2.6,2 Z" fill="#1f6fd0"/>
</g>
<!-- filter bar bits -->
<path d="M105.2,118.6 h5.6 v9.4 l-2.8,-2.4 l-2.8,2.4 Z" fill="#5c9fe2"/>
<line x1="114.4" y1="118" x2="114.4" y2="129" stroke="#5a5a5a" stroke-width="1"/>
<rect x="980" y="118" width="17" height="9.8" rx="1.6" fill="#56799f"/>
<path d="M983,122.9 h8.4" stroke="#111" stroke-width="2"/>
<path d="M990.2,119.6 l4.8,3.3 l-4.8,3.3 Z" fill="#111"/>
<path d="M1002.1,121.6 h4.7 l-2.35,2.7 Z" fill="#dcdcdc"/>
<path d="M1019,122.9 h6.4 M1022.3,119.6 v6.6" stroke="#cfcfcf" stroke-width="1.1"/>
<!-- related packet markers -->
<path d="M112.9,151.3 H107.5 V264.8 H112.9" fill="none" stroke="#3a4347" stroke-width="0.9"/>
<path d="M107.5,207.2 V219.8" stroke="#b0b0b0" stroke-width="0.9"/>
<path d="M103.1,189.3 H111" stroke="#12272e" stroke-width="0.9"/><path d="M110.2,187.4 L113.9,189.3 L110.2,191.2 Z" fill="#12272e"/>
<path d="M105.4,214.5 H113" stroke="#9c9c9c" stroke-width="0.9"/><path d="M106.2,212.6 L102.5,214.5 L106.2,216.4 Z" fill="#9c9c9c"/>
</svg>

<div id="mm">
<div style="top:3.20px;height:4.70px;background:#a0a0a0;border-radius:2px 0 0 0"></div>
<div style="top:7.70px;height:5.50px;background:#e7e6ff"></div>
<div style="top:13.00px;height:5.50px;background:#e4ffc7"></div>
<div style="top:18.31px;height:5.50px;background:#e7e6ff"></div>
<div style="top:23.61px;height:5.50px;background:#e4ffc7"></div>
<div style="top:28.91px;height:5.50px;background:#a0a0a0"></div>
<div style="top:34.21px;height:5.50px;background:#e7e6ff"></div>
<div style="top:39.52px;height:5.50px;background:#a0a0a0"></div>
<div style="top:44.82px;height:5.50px;background:#e7e6ff"></div>
<div style="top:50.12px;height:5.50px;background:#a0a0a0"></div>
<div style="top:55.43px;height:5.50px;background:#a0a0a0"></div>
<div style="top:60.73px;height:5.50px;background:#e7e6ff"></div>
<div style="top:66.03px;height:5.50px;background:#e4ffc7"></div>
<div style="top:71.34px;height:5.50px;background:#e7e6ff"></div>
<div style="top:76.64px;height:5.50px;background:#e4ffc7"></div>
<div style="top:81.94px;height:5.50px;background:#a0a0a0"></div>
<div style="top:87.25px;height:5.50px;background:#e7e6ff"></div>
<div style="top:92.55px;height:5.50px;background:#a0a0a0"></div>
<div style="top:97.85px;height:5.50px;background:#e7e6ff"></div>
<div style="top:103.15px;height:5.50px;background:#a0a0a0"></div>
<div style="top:108.46px;height:5.50px;background:#a0a0a0"></div>
<div style="top:113.76px;height:5.50px;background:#e7e6ff"></div>
<div style="top:119.06px;height:5.50px;background:#e4ffc7"></div>
<div style="top:124.37px;height:5.50px;background:#e7e6ff"></div>
<div style="top:129.67px;height:5.50px;background:#e4ffc7"></div>
<div style="top:134.97px;height:5.50px;background:#a0a0a0"></div>
<div style="top:140.27px;height:5.50px;background:#e7e6ff"></div>
<div style="top:145.58px;height:5.50px;background:#a0a0a0"></div>
<div style="top:150.88px;height:5.50px;background:#e7e6ff"></div>
<div style="top:156.18px;height:5.50px;background:#a0a0a0"></div>
<div style="top:161.49px;height:5.50px;background:#a0a0a0"></div>
<div style="top:166.79px;height:5.50px;background:#e7e6ff"></div>
<div style="top:172.09px;height:5.50px;background:#e4ffc7"></div>
<div style="top:177.40px;height:5.50px;background:#e7e6ff"></div>
<div style="top:182.70px;height:5.50px;background:#e4ffc7"></div>
<div style="top:188.00px;height:5.50px;background:#a0a0a0"></div>
<div style="top:193.30px;height:5.50px;background:#e7e6ff"></div>
<div style="top:198.61px;height:5.50px;background:#a0a0a0"></div>
<div style="top:203.91px;height:5.50px;background:#e7e6ff"></div>
<div style="top:209.21px;height:5.50px;background:#a0a0a0"></div>
<div style="top:214.52px;height:5.50px;background:#a0a0a0"></div>
<div style="top:219.82px;height:5.50px;background:#e7e6ff"></div>
<div style="top:225.12px;height:5.50px;background:#e4ffc7"></div>
<div style="top:230.43px;height:5.50px;background:#e7e6ff"></div>
<div style="top:235.73px;height:5.50px;background:#e4ffc7"></div>
<div style="top:241.03px;height:5.50px;background:#a0a0a0"></div>
<div style="top:246.33px;height:5.50px;background:#e7e6ff"></div>
<div style="top:251.64px;height:5.50px;background:#a0a0a0"></div>
<div style="top:256.94px;height:5.50px;background:#e7e6ff"></div>
<div style="top:262.24px;height:5.50px;background:#a0a0a0"></div>
<div style="top:267.55px;height:5.50px;background:#a0a0a0"></div>
<div style="top:272.85px;height:5.50px;background:#e7e6ff"></div>
<div style="top:278.15px;height:5.50px;background:#e4ffc7"></div>
<div style="top:283.46px;height:5.50px;background:#e7e6ff"></div>
<div style="top:288.76px;height:5.50px;background:#e7e6ff"></div>
<div style="top:294.06px;height:5.50px;background:#e4ffc7"></div>
<div style="top:299.37px;height:5.50px;background:#a0a0a0"></div>
<div style="top:304.67px;height:5.50px;background:#e7e6ff"></div>
<div style="top:309.97px;height:5.50px;background:#a0a0a0"></div>
<div style="top:315.27px;height:5.50px;background:#e7e6ff"></div>
<div style="top:320.58px;height:5.50px;background:#a0a0a0"></div>
<div style="top:325.88px;height:5.50px;background:#a0a0a0"></div>
<div style="top:331.18px;height:5.50px;background:#e7e6ff"></div>
<div style="top:336.49px;height:5.50px;background:#e4ffc7"></div>
<div style="top:341.79px;height:5.50px;background:#e7e6ff"></div>
<div style="top:347.09px;height:5.50px;background:#e4ffc7"></div>
<div style="top:352.39px;height:5.50px;background:#a0a0a0"></div>
<div style="top:357.70px;height:5.50px;background:#e7e6ff"></div>
</div>
</body>
</html>
